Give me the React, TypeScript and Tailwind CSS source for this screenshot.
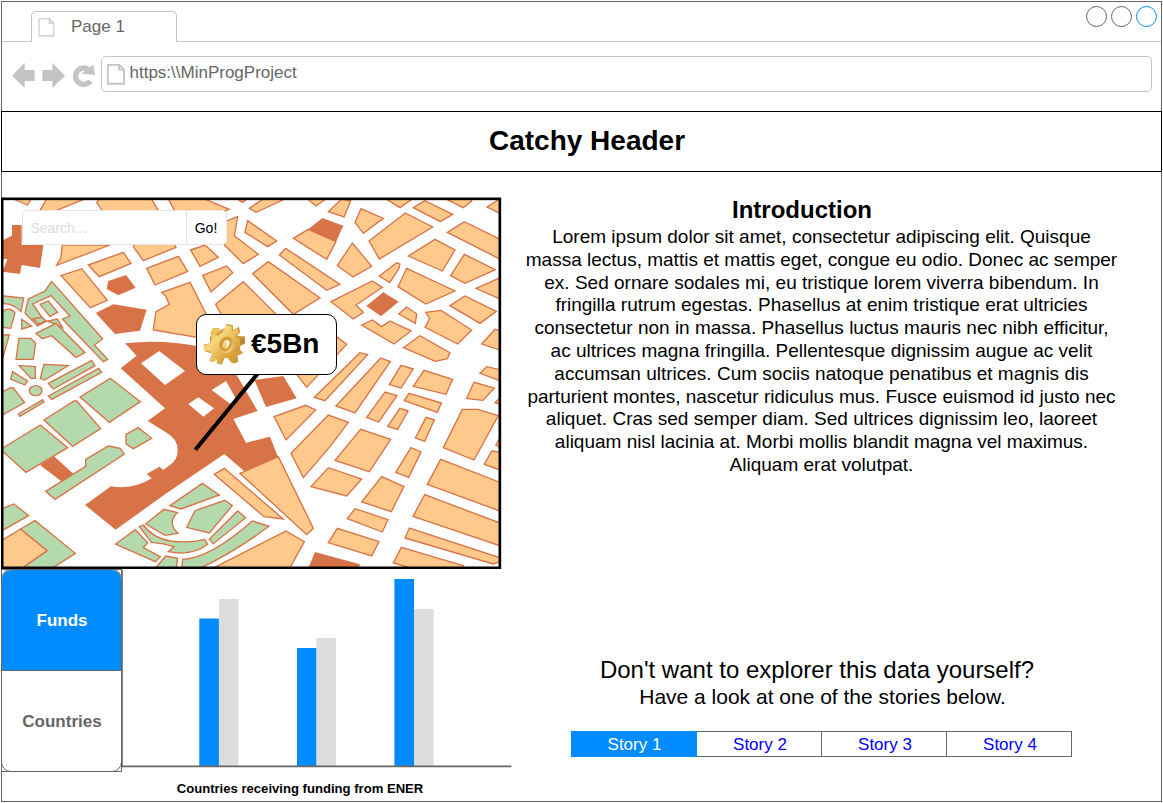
import React from "react";

type Kind = "block" | "park" | "landmark";
type Tile = { x: number; y: number; block?: string[]; park?: string[]; landmark?: string[] };

const KIND_CLASS: Record<Kind, string> = {
  block: "fill-[#ffc98b] stroke-[#d87347]",
  park: "fill-[#b3d9ad] stroke-[#d87347]",
  landmark: "fill-[#d87347] stroke-none",
};

// Map outlines, three units to a pixel, grouped by map sheet.
const TILES: Tile[] = [
  {
    x: 0,
    y: 0,
    block: [
      "40,12 82,30 94,12",
      "118,50 142,8 265,8 170,46",
      "290,22 300,8 452,8 480,55 312,55",
      "187,150 182,190 170,211 330,150",
      "265,210 370,172 393,205 298,245",
      "183,242 245,221 322,316 271,338",
      "400,155 430,197 528,157 520,145 405,145",
      "440,220 535,184 563,229 465,270",
      "485,292 570,262 620,360 640,400 620,432 460,405 468,350 508,328 497,303",
    ],
    park: [
      "155,259 308,432 283,450 323,493 310,500 187,372 210,363 153,302 98,327 134,378 110,390 75,355 85,312 135,288",
      "120,328 145,318 173,352 150,364",
      "110,394 136,380 172,372 188,398 168,388 137,377",
    ],
    landmark: [
      "36,90 65,90 65,150 130,150 120,219 65,210 60,237 8,230 22,192 8,192 8,136 36,122",
      "325,258 378,240 407,278 355,301 320,282",
      "287,354 340,328 440,344 420,407 345,417",
    ],
  },
  {
    x: 495,
    y: 0,
    block: [
      "8,8 30,50 165,55 192,43 110,8",
      "178,150 180,80 218,65 208,122 280,178 235,206",
      "248,77 335,138 308,155 240,112",
      "253,40 300,8 360,12 273,52",
      "210,8 233,22 250,8",
      "385,130 430,103 513,140 485,193",
      "343,180 362,160 525,268 485,286",
      "263,236 310,200 465,309 385,358",
      "152,328 235,260 345,370 175,370",
      "77,165 120,150 160,187 105,214",
      "113,241 185,213 203,233 138,291",
      "490,50 530,12 557,18 537,66",
      "425,10 453,33 485,10",
    ],
    landmark: ["430,103 472,69 535,92 513,140"],
  },
  {
    x: 990,
    y: 0,
    block: [
      "3,320 127,258 157,277 78,330 100,352 70,372",
      "75,82 93,41 160,70 100,115",
      "117,138 226,54 308,96 148,192",
      "165,10 210,38 250,10",
      "250,38 284,17 368,58 331,80",
      "340,8 400,38 425,18 420,8",
      "471,36 515,8 515,58",
      "352,112 403,80 515,135 515,195",
      "235,183 315,133 375,165 337,228",
      "22,212 67,144 125,214 69,246",
      "148,243 200,203 210,207 206,222 179,263",
      "204,275 230,220 375,288 287,327",
      "362,242 403,178 496,224 405,265",
      "438,280 515,246 515,314",
      "360,332 405,303 499,349 450,385",
      "206,357 230,336 260,357 256,385",
      "287,352 333,346 425,405 383,447 285,397 299,370",
    ],
    landmark: ["109,333 160,292 206,320 153,364"],
  },
  {
    x: 0,
    y: 375,
    park: [
      "65,-2 95,18 65,27",
      "98,-3 118,12 137,2 125,-8",
      "108,40 168,10 255,98 228,112 155,47 127,56",
      "57,55 92,55 107,70 100,118 48,118",
      "4,44 28,45 8,115",
      "58,137 106,140 106,175 93,175",
      "132,133 205,137 134,180 121,175",
      "38,155 82,183 75,195 32,177",
      "145,190 275,121 285,137 160,207",
      "145,228 296,145 305,157 155,238",
      "55,282 128,239 132,246 60,289",
      "4,217 32,203 40,204 74,248 4,287",
      "240,231 331,175 421,245 328,307",
      "132,300 222,243 230,243 302,326 218,379",
      "4,387 121,315 203,383 78,457 4,390",
      "378,343 415,323 455,355 400,386 378,372",
    ],
  },
  {
    x: 495,
    y: 345,
    block: [
      "385,180 425,232 545,103 515,80",
      "448,262 585,128 608,134 480,272",
      "513,288 647,144 676,155 570,309",
      "327,320 422,286 452,300 363,390",
      "378,430 490,315 550,337 495,410 415,503",
    ],
  },
  {
    x: 990,
    y: 375,
    block: [
      "95,15 127,0 155,20 180,3 243,33 192,72",
      "220,83 270,47 360,98 352,116 316,124",
      "455,72 495,28 515,34 515,92",
      "450,160 470,140 515,150 515,184",
      "410,235 432,187 493,204 459,241",
      "495,248 515,228 515,255",
      "178,194 213,136 250,147 213,204",
      "250,199 282,151 368,178 348,223",
      "110,292 165,216 201,227 146,306",
      "223,242 237,220 334,249 322,277",
      "173,319 210,265 234,273 203,328",
      "256,354 288,292 313,300 284,364",
      "340,383 397,268 443,268 505,287 432,420",
      "497,375 515,345 515,385",
      "15,421 92,328 182,358 118,455",
    ],
  },
  {
    x: 0,
    y: 750,
    block: ["4,287 62,252 142,317 60,374 4,374"],
    park: [
      "325,3 360,10 373,27 165,163 137,139 257,64 257,43",
      "4,192 42,177 86,212 4,258",
      "62,252 105,227 226,325 150,374 60,374 142,317",
      "347,297 406,254 443,293 430,308 481,335 466,350",
      "462,374 497,333 533,340 528,374",
    ],
    landmark: ["120,60 162,34 220,86 184,109"],
  },
  {
    x: 495,
    y: 750,
    block: [
      "225,85 340,35 445,250 425,269",
      "148,88 178,70 355,222 297,215",
      "135,374 363,258 418,290 372,374",
      "438,125 490,68 590,102 545,153",
      "490,293 517,250 642,290 620,333",
    ],
    park: [
      "15,182 112,115 163,150 48,192",
      "90,197 180,166 202,182 133,264 65,247",
      "133,283 218,198 242,218 145,296",
    ],
    landmark: ["428,374 450,321 585,358 580,374"],
  },
  {
    x: 990,
    y: 750,
    block: [
      "197,82 243,8 273,21 236,97",
      "463,58 485,18 515,22 515,77",
      "292,118 332,43 515,114 515,200",
      "95,171 155,95 222,125 184,200",
      "249,214 284,149 515,236 515,304",
      "52,221 75,191 174,224 157,261",
      "225,279 238,249 515,340 515,348 490,357",
      "190,354 214,307 400,362 400,376 270,376",
    ],
  },
];

const KINDS: Kind[] = ["block", "park", "landmark"];

function CityMap() {
  return (
    <svg viewBox="3 6 1503 1116" className="block h-[372px] w-[501px]">
      <defs>
        <clipPath id="mapArea">
          <rect x="6" y="10" width="1493" height="1108" />
        </clipPath>
      </defs>
      <rect x="6" y="10" width="1493" height="1108" fill="#fff" />
      <g strokeWidth="4" clipPath="url(#mapArea)">
        <path
          className="fill-[#d87347]"
          d="M375,445 Q480,433 585,452 L690,500 710,540 773,648 700,672 738,743 810,725 835,788 733,829 673,777 495,898 347,1004 255,930 333,874 Q400,885 455,850 L440,837 478,815 490,825 510,810 Q533,795 533,765 Q533,730 495,710 L443,678 495,640 362,520 410,482Z"
        />
        <path className="fill-white" d="M423,505 478,468 555,528 495,570Z M565,627 595,607 642,640 610,665Z M635,585 678,558 710,615 692,628Z" />
        <path className="fill-[#d87347]" d="M763,555 850,543 890,610 798,636Z" />
        {TILES.map((tile) => (
          <g key={`${tile.x}-${tile.y}`} transform={`translate(${tile.x} ${tile.y})`}>
            {KINDS.map((kind) =>
              (tile[kind] ?? []).map((points) => <polygon key={points} points={points} className={KIND_CLASS[kind]} />),
            )}
          </g>
        ))}
        <g className={KIND_CLASS.park}>
          <path d="M4,302 L71,309 63,350 Q38,323 4,326Z" />
          <path d="M4,352 Q28,332 45,354 L32,400 4,397Z" />
          <ellipse cx="107" cy="587" rx="19" ry="15" />
          <path d="M437,987 L492,943 532,953 Q500,983 534,1015 L495,1021Z" />
          <path d="M418,995 L430,990 Q460,1030 510,1038 Q570,1045 613,1033 L623,1048 Q575,1085 505,1070 L522,1055 Q490,1045 455,1042Z" />
          <path d="M545,1124 L548,1093 Q630,1090 757,978 L807,994 Q690,1080 590,1124Z" />
        </g>
      </g>
      <line x1="778" y1="530" x2="586" y2="764" stroke="#000" strokeWidth="12" />
      <rect x="6.5" y="11.5" width="1493" height="1107" fill="none" stroke="#000" strokeWidth="8" />
    </svg>
  );
}

function Gear() {
  return (
    <svg viewBox="116 40 130 130" className="h-[43px] w-[43px] shrink-0">
      <defs>
        <linearGradient id="gearFace" x1="0" y1="0" x2="1" y2="1">
          <stop offset="0" stopColor="#e0a63c" />
          <stop offset="0.35" stopColor="#f5d67d" />
          <stop offset="0.65" stopColor="#e3ad45" />
          <stop offset="1" stopColor="#c98a2c" />
        </linearGradient>
        <linearGradient id="gearHub" x1="0" y1="0" x2="1" y2="1">
          <stop offset="0" stopColor="#c38428" />
          <stop offset="1" stopColor="#f8e09a" />
        </linearGradient>
      </defs>
      <path
        fill="#d09a40"
        d="M183,54 188,42 206,47 207,61 225,51 228,67 220,79 242,80 243,102 229,109 228,121 238,131 221,138 222,158 207,163 196,145 182,145 172,166 158,162 160,150 143,159 135,153 145,133 119,125 118,105 137,101 137,81 146,75 138,71 146,56 163,55 167,63Z"
      />
      <path
        fill="url(#gearFace)"
        d="M174,68 186,47 202,49 203,65 219,56 224,71 213,84 230,88 229,107 217,112 214,126 224,134 208,142 211,157 202,160 190,145 177,146 168,165 157,161 161,143 150,143 139,152 145,132 133,125 119,124 119,106 137,103 142,90 139,75 149,70 160,79Z"
      />
      <path fill="#efc45e" d="M138,70 147,57 163,56 168,66 154,74Z M136,152 145,143 160,145 157,153 144,158Z" />
      <path fill="#bd8438" d="M227,88 242,82 243,101 229,107Z" />
      <ellipse cx="187" cy="106" rx="22" ry="25" fill="url(#gearHub)" transform="rotate(25 187 106)" />
      <ellipse cx="184" cy="106" rx="17" ry="20" fill="#d99a35" transform="rotate(25 184 106)" />
      <ellipse cx="186" cy="104" rx="9" ry="13" fill="#fff" transform="rotate(25 186 104)" />
      <path d="M176,110 Q181,122 191,117 Q185,109 188,92 Q178,98 176,110Z" fill="#f2cd72" />
    </svg>
  );
}

function PageIcon({ className, weight }: { className: string; weight: number }) {
  return (
    <svg viewBox="0 0 17 20" className={className} fill="none" stroke="#c4c4c4" strokeWidth={weight}>
      <path d="M0.7,0.7 H11.5 L16.2,5.4 V18.8 H0.7Z M11.5,0.7 V5.4 H16.2" />
    </svg>
  );
}

function NavIcons() {
  return (
    <svg viewBox="33 183 258 87" className="h-[29px] w-[86px]" fill="#c4c4c4">
      <path d="M36,227 74,188 V210 H104 V243 H74 V264Z" />
      <path d="M195,227 157,188 V210 H127 V243 H157 V264Z" />
      <path d="M271,243 A24.500,24.500 0 1 1 266,209" fill="none" stroke="#c4c4c4" strokeWidth="16" />
      <path d="M280,194 285,225 244,221Z" />
    </svg>
  );
}

const BARS = [
  { x: 77.3, top: 49.5, own: true },
  { x: 97, top: 30, own: false },
  { x: 175, top: 79, own: true },
  { x: 194.4, top: 69, own: false },
  { x: 272.4, top: 10, own: true },
  { x: 292, top: 40, own: false },
];

function FundingChart() {
  return (
    <div className="flex w-[390px] flex-col">
      <svg viewBox="0 0 390 199" className="block h-[199px] w-[390px]">
        {BARS.map((bar) => (
          <rect key={bar.x} x={bar.x} y={bar.top} width="19.6" height={197 - bar.top} fill={bar.own ? "#008cff" : "#dddddd"} />
        ))}
        <path d="M0.200,1 V197.400" stroke="#777" strokeWidth="1.400" />
        <path d="M0,197.400 H389.400" stroke="#666" strokeWidth="1.900" />
      </svg>
      <div className="mt-[13px] w-[356px] text-center text-[13.1px] leading-4 font-bold whitespace-nowrap">Countries receiving funding from ENER</div>
    </div>
  );
}

const INTRO = [
  "Lorem ipsum dolor sit amet, consectetur adipiscing elit. Quisque",
  "massa lectus, mattis et mattis eget, congue eu odio. Donec ac semper",
  "ex. Sed ornare sodales mi, eu tristique lorem viverra bibendum. In",
  "fringilla rutrum egestas. Phasellus at enim tristique erat ultricies",
  "consectetur non in massa. Phasellus luctus mauris nec nibh efficitur,",
  "ac ultrices magna fringilla. Pellentesque dignissim augue ac velit",
  "accumsan ultrices. Cum sociis natoque penatibus et magnis dis",
  "parturient montes, nascetur ridiculus mus. Fusce euismod id justo nec",
  "aliquet. Cras sed semper diam. Sed ultrices dignissim leo, laoreet",
  "aliquam nisl lacinia at. Morbi mollis blandit magna vel maximus.",
  "Aliquam erat volutpat.",
];

export default function App() {
  return (
    <div className="h-[803px] w-[1163px] bg-white p-px font-['Liberation_Sans',Arial,sans-serif] text-black">
      <div className="flex h-[801px] w-[1161px] flex-col border border-[#666]">
        <div className="flex h-10 shrink-0">
          <div className="w-[29px] border-b border-[#c4c4c4]" />
          <div className="mt-[9px] flex w-[146px] items-start rounded-t-[5px] border border-b-0 border-[#c4c4c4] pt-[6px] pl-[6px]">
            <PageIcon className="h-[19px] w-[17px]" weight={1.1} />
            <span className="ml-4 text-[17px] leading-[18px] text-[#666]">Page 1</span>
          </div>
          <div className="flex flex-1 justify-end gap-1 border-b border-[#c4c4c4] pt-1 pr-1">
            <span className="size-[21px] rounded-full border border-[#666]" />
            <span className="size-[21px] rounded-full border border-[#666]" />
            <span className="size-[21px] rounded-full border border-[#008cff]" />
          </div>
        </div>
        <div className="flex h-[69px] shrink-0 items-start pl-[9px]">
          <div className="mt-[19px] h-[29px] w-[86px]">
            <NavIcons />
          </div>
          <div className="mt-[14px] ml-1 flex h-9 w-[1051px] items-start rounded-[5px] border border-[#c4c4c4] pl-[5px]">
            <PageIcon className="mt-[7px] h-[21px] w-[18px]" weight={1.7} />
            <span className="ml-[4.5px] pt-[7px] text-[17px] leading-[18px] text-[#666]">https:\\MinProgProject</span>
          </div>
        </div>
        <header className="-mx-px flex h-[61px] shrink-0 items-center justify-center border border-black pl-[11px] pb-[2px] text-[28px] font-bold">
          Catchy Header
        </header>

        <main className="-ml-px flex flex-1">
          <section className="w-[511px] pt-[25px]">
            <div className="relative h-[372px] w-[501px]">
              <CityMap />
              <div className="absolute top-[13px] left-[20.5px] flex h-[35px] w-[205px] rounded-[5px] border border-[#e6e6e6] bg-white text-sm leading-[34px]">
                <span className="w-[164px] border-r border-[#e6e6e6] pl-2 text-[#ddd]">Search...</span>
                <span className="flex-1 text-center">Go!</span>
              </div>
              <div className="absolute top-[117px] left-[195px] flex h-[61px] w-[141px] items-center rounded-[10px] border border-black bg-white pl-[6px]">
                <Gear />
                <span className="ml-[5px] pb-[2px] text-[28px] leading-8 font-bold">€5Bn</span>
              </div>
            </div>
            <div className="flex h-[232px]">
              <div className="h-[203px] w-[121px] border border-[#666]">
                <div className="-m-px flex h-[203px] w-[121px] flex-col overflow-hidden rounded-[10px] border border-[#666] text-center text-[17px] font-bold">
                  <div className="h-[101px] shrink-0 border-b border-[#666] bg-[#008cff] pl-px leading-[101px] text-white">Funds</div>
                  <div className="pl-px leading-[101px] text-[#666]">Countries</div>
                </div>
              </div>
              <FundingChart />
            </div>
          </section>

          <section className="ml-[9px] flex w-[601px] flex-col">
            <h1 className="mt-6 pr-[39px] text-center text-2xl leading-[28px] font-bold">Introduction</h1>
            <div className="mt-[2px] text-center text-[19px] leading-[22.8px] whitespace-nowrap">
              {INTRO.map((line) => (
                <div key={line}>{line}</div>
              ))}
            </div>
            <div className="mt-[178px] pr-[9px] text-center text-2xl leading-[29px]">Don't want to explorer this data yourself?</div>
            <div className="pl-[2px] text-center text-[21px] leading-[25px]">Have a look at one of the stories below.</div>
            <nav className="mt-[22px] ml-[50px] flex h-[26px] w-[501px] border border-[#666] text-center text-[17px] leading-[25px] text-[#0000ee]">
              <span className="-my-px -ml-px w-[126px] bg-[#008cff] pt-px pl-px text-white">Story 1</span>
              <span className="w-[125px] border-r border-[#666] pl-[2px]">Story 2</span>
              <span className="w-[125px] border-r border-[#666] pl-[2px]">Story 3</span>
              <span className="flex-1 pl-[2px]">Story 4</span>
            </nav>
          </section>
        </main>
      </div>
    </div>
  );
}
